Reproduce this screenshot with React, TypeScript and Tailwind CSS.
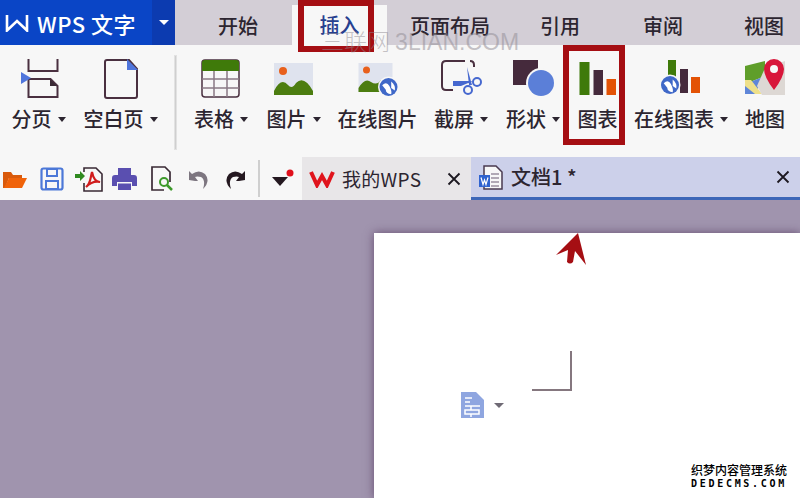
const cjk = "font-['Noto_Sans_CJK_SC','Noto_Sans',sans-serif]";

function Caret() {
  return <span className="ml-[6px] h-0 w-0 border-x-[4px] border-t-[5px] border-x-transparent border-t-[#2c2530]" />;
}

function Globe({ cx, cy, r }: { cx: number; cy: number; r: number }) {
  return (
    <g>
      <circle cx={cx} cy={cy} r={r + 1.5} fill="#f7f7f7" />
      <circle cx={cx} cy={cy} r={r} fill="#3f68c8" />
      <path
        d={`M${cx - r * 0.7} ${cy - r * 0.2}q${r * 0.5} ${-r * 0.5} ${r * 0.8} ${r * 0.1}t${r * 0.2} ${r * 0.9}q${-r * 0.6} ${-r * 0.1} ${-r * 0.6} ${-r * 0.5}z`}
        fill="#fff"
      />
      <path d={`M${cx + r * 0.3} ${cy - r * 0.6}q${r * 0.5} ${r * 0.4} ${r * 0.4} ${r * 1}l${-r * 0.4} ${-r * 0.3}z`} fill="#fff" />
    </g>
  );
}

function CloseIcon() {
  return (
    <svg width="14" height="14" viewBox="0 0 14 14">
      <path d="M1.5 1.5L12.5 12.5M12.5 1.5L1.5 12.5" stroke="#1c1820" strokeWidth="1.8" />
    </svg>
  );
}

function RibbonItem({
  label,
  width,
  caret,
  children,
}: {
  label: string;
  width: string;
  caret?: boolean;
  children: React.ReactNode;
}) {
  return (
    <div className={`flex shrink-0 flex-col items-center ${width}`}>
      <svg width="44" height="44" viewBox="0 0 44 44" className="h-[44px] w-[44px] overflow-visible">
        {children}
      </svg>
      <div className="mt-[5px] flex h-[28px] items-center whitespace-nowrap text-[20px] font-medium leading-none text-[#2c2530]">
        {label}
        {caret && <Caret />}
      </div>
    </div>
  );
}

export default function App() {
  return (
    <div className={`relative flex h-[498px] w-[800px] flex-col overflow-hidden bg-[#a094ae] ${cjk}`}>
      {/* title row */}
      <div className="flex h-[45px] shrink-0 bg-[#d3ced6]">
        <div className="flex w-[175px] shrink-0 bg-[#0a45c6] text-white">
          <div className="flex w-[152px] items-center pl-[5px]">
            <svg width="24" height="18" viewBox="0 0 24 18">
              <path d="M2 1V16.5L12 7L22 16.5V1" fill="none" stroke="#fff" strokeWidth="2.6" />
            </svg>
            <span className="ml-[8px] whitespace-nowrap text-[22px] font-medium leading-none tracking-[0.5px]">WPS 文字</span>
          </div>
          <div className="flex flex-1 items-center justify-center bg-[#0c3bb0]">
            <span className="h-0 w-0 border-x-[5px] border-t-[5px] border-x-transparent border-t-white" />
          </div>
        </div>
        <div className="flex items-end whitespace-nowrap text-[20px] font-medium leading-none text-[#2c2530]">
          <span className="mb-[9px] ml-[43px]">开始</span>
          <span className="ml-[34px] flex h-[40px] w-[95px] items-center justify-center bg-[#f7f7f7] pb-[1px] text-[#27408f]">插入</span>
          <span className="mb-[9px] ml-[23px]">页面布局</span>
          <span className="mb-[9px] ml-[50px]">引用</span>
          <span className="mb-[9px] ml-[63px]">审阅</span>
          <span className="mb-[9px] ml-[61px]">视图</span>
        </div>
      </div>

      {/* ribbon */}
      <div className="flex h-[112px] shrink-0 gap-[17px] bg-[#f7f7f7] pl-[11px] pt-[11px]">
        <RibbonItem label="分页" width="w-[55px]" caret>
          <path d="M6 4V16H35V4M6 38V24H28L35 31V42H6V38" transform="translate(5.5 -1)" fill="none" stroke="#4a3040" strokeWidth="2" />
          <path d="M33 23V30H40Z" fill="#3a2a35" />
          <path d="M4 16L14 22L4 28Z" fill="#4f75dc" />
        </RibbonItem>
        <RibbonItem label="空白页" width="w-[75px]" caret>
          <path d="M8 4H30L38 13V40Q38 42 36 42H8Q6 42 6 40V6Q6 4 8 4Z" fill="#f7f7f7" stroke="#4a3040" strokeWidth="2" />
          <path d="M28 3L39 14H28Z" fill="#4f75dc" />
        </RibbonItem>
        <div className="mb-[8px] w-[1px] shrink-0 bg-[#cfcfcf] outline outline-1 outline-[#e2e2e2]" />
        <RibbonItem label="表格" width="w-[56px]" caret>
          <rect x="3" y="4" width="37" height="37" rx="3" fill="#f7f7f7" stroke="#4a3040" strokeWidth="1.5" />
          <path d="M3 15V7Q3 4 6 4H37Q40 4 40 7V15Z" fill="#3f7a0a" />
          <path d="M3 23H40M3 32H40M15 15V41M28 15V41" stroke="#8a7a85" strokeWidth="1.5" />
        </RibbonItem>
        <RibbonItem label="图片" width="w-[55px]" caret>
          <rect x="2" y="7" width="39" height="32" fill="#dfe3ee" />
          <circle cx="11" cy="15" r="4" fill="#e8601c" />
          <path d="M2 39V35Q9 21 16 29Q20 34 24 27Q32 19 41 35V39Z" fill="#4c7d10" />
        </RibbonItem>
        <RibbonItem label="在线图片" width="w-[79px]" caret={false}>
          <rect x="2.5" y="7" width="34" height="29" fill="#dfe3ee" />
          <circle cx="10.5" cy="14" r="3.5" fill="#e8601c" />
          <path d="M2.5 36V32Q9 21 15 26Q21 30 25 24L31 36Z" fill="#4c7d10" />
          <Globe cx={32.5} cy={31} r={9} />
        </RibbonItem>
        <RibbonItem label="截屏" width="w-[54px]" caret>
          <path d="M26 5H7Q3 5 3 9V30Q3 34 7 34H14" fill="none" stroke="#4a3040" strokeWidth="2" />
          <path d="M31 5Q35 5 35 9V11" fill="none" stroke="#4a3040" strokeWidth="2" />
          <path d="M14 25H34L22 30H14ZM28 11L33 29H30Z" fill="#4668cf" />
          <circle cx="38" cy="26" r="4" fill="none" stroke="#4668cf" strokeWidth="2" />
          <circle cx="29" cy="34" r="4" fill="none" stroke="#4668cf" strokeWidth="2" />
        </RibbonItem>
        <RibbonItem label="形状" width="w-[56px]" caret>
          <rect x="2" y="4" width="25" height="25" fill="#452a3c" />
          <circle cx="30" cy="27" r="15" fill="#f7f7f7" />
          <circle cx="30" cy="27" r="13" fill="#5b7fd8" />
        </RibbonItem>
        <RibbonItem label="图表" width="w-[39px]">
          <rect x="3.5" y="6" width="10" height="33" fill="#3f7a0a" />
          <rect x="17.5" y="14" width="9.5" height="25" fill="#452a3c" />
          <rect x="30.5" y="23" width="9.5" height="16" fill="#e35205" />
        </RibbonItem>
        <RibbonItem label="在线图表" width="w-[94px]" caret>
          <rect x="9" y="4" width="8" height="19" fill="#3f7a0a" />
          <rect x="21" y="13" width="8" height="24" fill="#452a3c" />
          <rect x="32" y="21" width="9" height="16" fill="#e35205" />
          <Globe cx={11} cy={29} r={9} />
        </RibbonItem>
        <RibbonItem label="地图" width="w-[40px]">
          <path d="M2 10L22 5V20L2 28Z" fill="#5f9e2a" />
          <path d="M2 28L22 20L12 38H2Z" fill="#5f86d8" />
          <path d="M2 24L8 24L19 38H12L2 30Z" fill="#eee08a" />
          <path d="M22 12L42 5V39H19L14 30Z" fill="#ddd8d4" />
          <path d="M31 34Q21 21 21 13A10 10 0 0 1 41 13Q41 21 31 34Z" fill="#d8163a" />
          <circle cx="31" cy="13" r="4" fill="#f7f7f7" />
        </RibbonItem>
      </div>

      {/* quick toolbar + doc tabs */}
      <div className="flex h-[43px] shrink-0 bg-[#f7f7f7]">
        <div className="flex w-[302px] shrink-0 items-center pl-[3px]">
          <svg width="24" height="22" viewBox="0 0 24 22">
            <path d="M0 4H8L10 7H19V10H6L2 20H0Z" fill="#d95a0c" />
            <path d="M6 10H24L19 20H1Z" fill="#f0630a" />
          </svg>
          <svg width="24" height="24" viewBox="0 0 24 24" className="ml-[13px]">
            <rect x="1.5" y="1.5" width="21" height="21" rx="2" fill="#f7f7f7" stroke="#4c78d8" strokeWidth="2.2" />
            <path d="M7 2H17V9H7ZM6 14H18V22H6Z" fill="none" stroke="#4c78d8" strokeWidth="2" />
          </svg>
          <svg width="28" height="26" viewBox="0 0 28 26" className="ml-[11px]">
            <path d="M9 6V2H21L27 8V25H9V17" fill="none" stroke="#3a2a35" strokeWidth="1.6" />
            <path d="M0 8H5V5L10 10L5 15V12H0Z" fill="#2f8a20" />
            <path d="M17 6C15 13 16 17 11 21C15 17 20 15 25 16C20 16 18 11 17 6Z" fill="none" stroke="#d01c1c" strokeWidth="2.2" />
          </svg>
          <svg width="25" height="24" viewBox="0 0 25 24" className="ml-[9px]">
            <rect x="6" y="1" width="13" height="7" fill="#5a4fb0" />
            <path d="M0 11Q0 8 3 8H22Q25 8 25 11V19H20V15H5V19H0Z" fill="#5a4fb0" />
            <rect x="6" y="16.5" width="13" height="6.5" fill="#5a4fb0" />
          </svg>
          <svg width="24" height="26" viewBox="0 0 24 26" className="ml-[13px]">
            <path d="M20 16V6L15 1H2V24H14" fill="none" stroke="#3a2a35" strokeWidth="1.7" />
            <circle cx="14" cy="16" r="4" fill="none" stroke="#3d9a2a" strokeWidth="2" />
            <path d="M17 19L22 24" stroke="#3d9a2a" strokeWidth="2.5" />
          </svg>
          <svg width="22" height="22" viewBox="0 0 22 22" className="ml-[14px]">
            <path d="M7 13L1 12L1 3L4 6Q11 1 17 6Q23 13 15 21Q18 12 13 9Q9 8 7 9L10 13Z" fill="#7d7680" />
          </svg>
          <svg width="22" height="22" viewBox="0 0 22 22" className="ml-[14px]">
            <path d="M15 13L21 12L21 3L18 6Q11 1 5 6Q-1 13 7 21Q4 12 9 9Q13 8 15 9L12 13Z" fill="#241820" />
          </svg>
          <div className="ml-[12px] h-[37px] w-[2px] bg-[#cfcfcf]" />
          <svg width="24" height="20" viewBox="0 0 24 20" className="ml-[12px]">
            <path d="M0 8H16L8 17Z" fill="#241820" />
            <path d="M3 8H13V10H3Z" fill="#241820" />
            <circle cx="18" cy="4" r="3.5" fill="#e0101c" />
          </svg>
        </div>
        <div className="flex w-[169px] shrink-0 items-center bg-[#e8e6e8] pl-[7px]">
          <svg width="26" height="18" viewBox="0 0 26 18">
            <path d="M2 2L8 15L13 6L18 15L24 2" fill="none" stroke="#e0141c" strokeWidth="4" />
          </svg>
          <span className="ml-[7px] w-[105px] whitespace-nowrap text-[19px] tracking-[0.3px] leading-none text-[#2c2530]">我的WPS</span>
          <CloseIcon />
        </div>
        <div className="flex flex-1 items-center border-b-[3px] border-[#3d67b8] bg-[#ccd0ea] pl-[8px]">
          <svg width="24" height="25" viewBox="0 0 24 25">
            <path d="M5 1H17L23 7V24H5Z" fill="#f7f7f7" stroke="#4a3a50" strokeWidth="1.5" />
            <path d="M12 9H20M12 13H20M12 17H20M12 21H20" stroke="#9a90a0" strokeWidth="1.3" />
            <rect x="0" y="10" width="11" height="12" fill="#2f63d0" />
            <path d="M2 12.5L4 19.5L5.5 15L7 19.5L9 12.5" fill="none" stroke="#fff" strokeWidth="1.2" />
          </svg>
          <span className="ml-[8px] w-[265px] whitespace-nowrap text-[20px] font-medium leading-none text-[#2c2530]">文档1 *</span>
          <CloseIcon />
        </div>
      </div>

      {/* workspace */}
      <div className="flex flex-1 pl-[374px] pt-[33px]">
        <div className="flex-1 bg-white pl-[87px] pt-[118px] shadow-[0_0_9px_rgba(70,40,80,0.65)]">
          <div className="ml-[71px] h-[40px] w-[40px] border-b-2 border-r-2 border-[#85777f]" />
          <div className="mt-[1px] flex items-center">
            <svg width="23" height="26" viewBox="0 0 23 26">
              <path d="M0 0H15L23 8V26H0Z" fill="#8fa6e0" />
              <path d="M4 6H11M4 10H9M4 14H19M10 14V18M4 18H18V22H4ZM10 22V25" fill="none" stroke="#fff" strokeWidth="1.5" />
            </svg>
            <span className="ml-[10px] h-0 w-0 border-x-[5px] border-t-[5px] border-x-transparent border-t-[#6f6a75]" />
          </div>
        </div>
      </div>

      {/* callout boxes, watermarks, arrow lie over the shot */}
      <div className="absolute left-[298px] top-0 h-[52px] w-[76px] border-[6px] border-[#a50e13]" />
      <div className="absolute left-[563px] top-[45px] h-[100px] w-[62px] border-[6px] border-[#a50e13]" />
      <div className="absolute left-[321px] top-[29px] whitespace-nowrap text-[23px] font-light leading-none text-[#8f8a92]/50">
        三联网 <span className="font-['Liberation_Sans',sans-serif]">3LIAN.COM</span>
      </div>
      <svg width="32" height="34" viewBox="0 0 32 34" className="absolute left-[555px] top-[232px]">
        <path d="M23 1L1 23L13 18L12 30Q15 33 18 30L20 19L31 33Z" fill="#a50e13" />
      </svg>
      <div className="absolute left-[691px] top-[462px] flex flex-col items-center text-black [text-shadow:0_0_2px_#fff,0_0_2px_#fff]">
        <span className="whitespace-nowrap text-[12px] font-medium leading-[16px]">织梦内容管理系统</span>
        <span className="whitespace-nowrap font-['DejaVu_Sans_Mono',monospace] text-[10px] font-bold leading-[12px] tracking-[2.7px]">DEDECMS.COM</span>
      </div>
    </div>
  );
}
